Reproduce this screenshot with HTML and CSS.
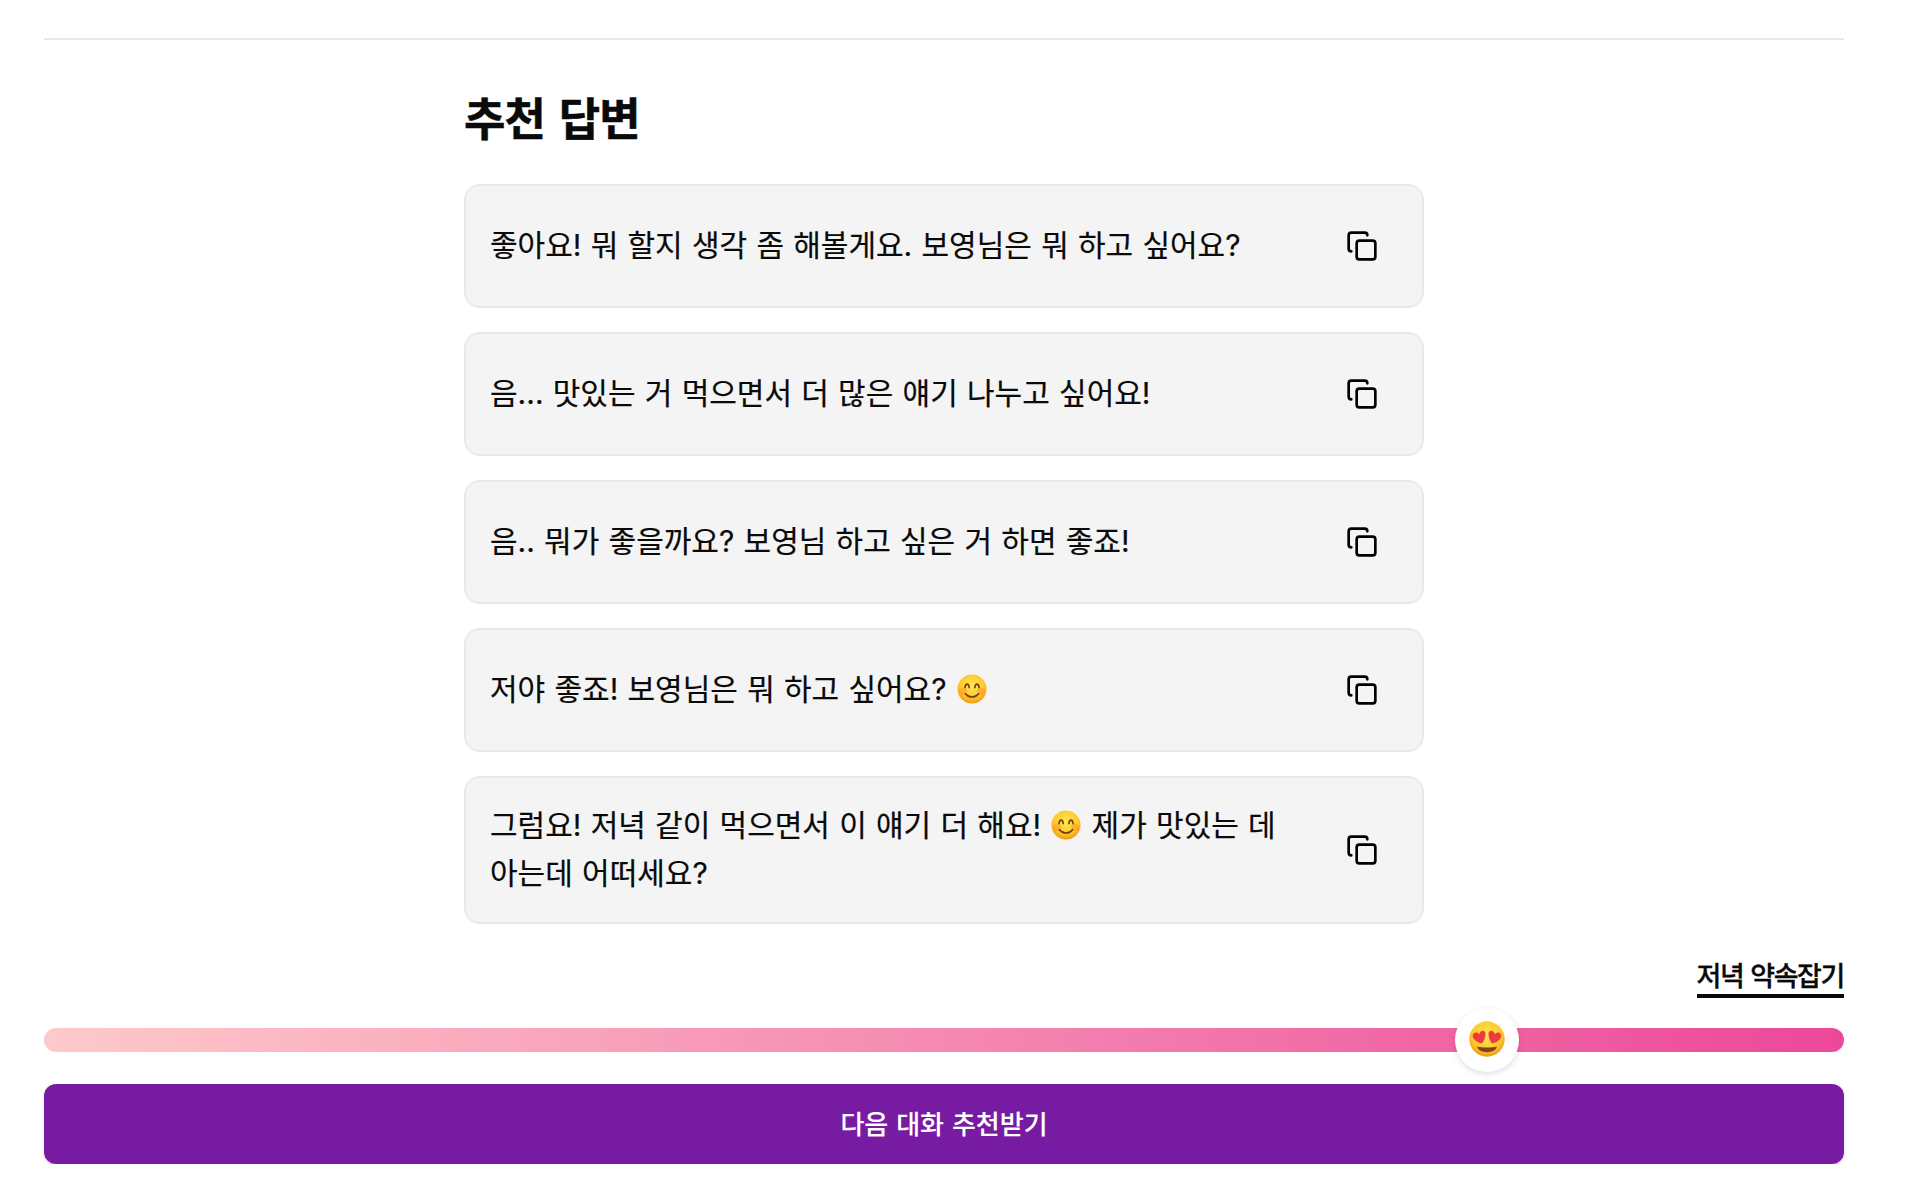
FILE: index.html
```html
<!DOCTYPE html>
<html lang="ko">
<head>
    <meta charset="UTF-8">
    <meta name="viewport" content="width=device-width, initial-scale=1.0">
    <link rel="stylesheet" href="styles.css">
    <title>추천 답변</title>
</head>
<body>
    <svg class="defs" width="0" height="0">
        <defs>
            <radialGradient id="face" cx="50%" cy="38%" r="64%">
                <stop offset="0" stop-color="#ffe750"/>
                <stop offset="0.65" stop-color="#fec92e"/>
                <stop offset="1" stop-color="#ee930f"/>
            </radialGradient>
            <symbol id="copy" viewBox="0 0 24 24">
                <rect width="14" height="14" x="8" y="8" rx="2" ry="2"/>
                <path d="M4 16c-1.1 0-2-.9-2-2V4c0-1.1.9-2 2-2h10c1.1 0 2 .9 2 2"/>
            </symbol>
            <symbol id="smile" viewBox="0 0 32 32">
                <circle cx="16" cy="16" r="15.5" fill="url(#face)"/>
                <circle cx="6.5" cy="18.5" r="4" fill="#ff7a1f" opacity="0.35"/>
                <circle cx="25.5" cy="18.5" r="4" fill="#ff7a1f" opacity="0.35"/>
                <path d="M8.5 14.5c.6-5 4-5 4.6 0M19 14.5c.6-5 4-5 4.6 0M9 21c3.5 4.7 10.5 4.7 14 0" fill="none" stroke="#704015" stroke-width="1.7" stroke-linecap="round"/>
            </symbol>
            <symbol id="heart-eyes" viewBox="0 0 36 36">
                <circle cx="18" cy="18" r="17.7" fill="url(#face)"/>
                <path d="M8 25.5c6 1.4 14 1.4 20 0-1 3.7-5 5.7-10 5.7s-9-2-10-5.7z" fill="#7a451b"/>
                <path d="M13 22.5C8.5 21.5 4 18.8 3.7 15c-.2-3.7 4.5-4.8 6.500-1.500.5-4.500 6-5 6.300-.8.2 3.500-1.500 7-3.500 9.800z" fill="#ee3a3f"/>
                <path d="M23 22.5c4.5-1 9-3.700 9.300-7.500.2-3.700-4.500-4.800-6.500-1.500-.5-4.500-6-5-6.300-.8-.2 3.500 1.500 7 3.500 9.800z" fill="#ee3a3f"/>
            </symbol>
        </defs>
    </svg>

    <main>
        <section class="answers">
            <h1>추천 답변</h1>

            <div class="card">
                <p>좋아요! 뭐 할지 생각 좀 해볼게요. 보영님은 뭐 하고 싶어요?</p>
                <button class="copy-button" aria-label="복사"><svg><use href="#copy"/></svg></button>
            </div>
            <div class="card">
                <p>음... 맛있는 거 먹으면서 더 많은 얘기 나누고 싶어요!</p>
                <button class="copy-button" aria-label="복사"><svg><use href="#copy"/></svg></button>
            </div>
            <div class="card">
                <p>음.. 뭐가 좋을까요? 보영님 하고 싶은 거 하면 좋죠!</p>
                <button class="copy-button" aria-label="복사"><svg><use href="#copy"/></svg></button>
            </div>
            <div class="card">
                <p>저야 좋죠! 보영님은 뭐 하고 싶어요? <svg class="emoji"><use href="#smile"/></svg></p>
                <button class="copy-button" aria-label="복사"><svg><use href="#copy"/></svg></button>
            </div>
            <div class="card">
                <p>그럼요! 저녁 같이 먹으면서 이 얘기 더 해요! <svg class="emoji"><use href="#smile"/></svg> 제가 맛있는 데 아는데 어떠세요?</p>
                <button class="copy-button" aria-label="복사"><svg><use href="#copy"/></svg></button>
            </div>
        </section>

        <div class="goal"><span>저녁 약속잡기</span></div>

        <div class="slider">
            <div class="thumb" style="left: 80.17%"><svg><use href="#heart-eyes"/></svg></div>
        </div>

        <button class="next-button">다음 대화 추천받기</button>
    </main>
</body>
</html>
```
FILE: styles.css
```css
* {
    box-sizing: border-box;
}

body {
    font-family: Inter, 'Noto Sans CJK KR', sans-serif;
    margin: 0;
    background-color: #fff;
    color: #0a0a0a;
}

.defs {
    position: absolute;
}

main {
    width: 1800px;
    margin: 38px 0 0 44px;
    border-top: 2px solid #e8e8e8;
    display: flex;
    flex-direction: column;
}

.answers {
    width: 960px;
    margin: 0 auto;
    padding-top: 48px;
    display: flex;
    flex-direction: column;
    gap: 24px;
}

h1 {
    margin: 0 0 8px;
    font-size: 45px;
    line-height: 64px;
    font-weight: 700;
    letter-spacing: -0.9px;
    word-spacing: 4px;
    -webkit-text-stroke: 0.5px #0a0a0a;
}

.card {
    display: flex;
    align-items: center;
    justify-content: space-between;
    padding: 24px 20px 24px 24px;
    border: 2px solid #e9e9e9;
    border-radius: 16px;
    background-color: #f4f4f4;
}

.card p {
    margin: -1px 0 0;
    padding-bottom: 1px;
    max-width: 816px;
    font-size: 30px;
    line-height: 48px;
    word-spacing: 0.8px;
    word-break: keep-all;
    -webkit-text-stroke: 0.2px #0a0a0a;
}

.emoji {
    width: 30px;
    height: 30px;
    margin: 0 1px;
    vertical-align: -4px;
}

.copy-button {
    display: flex;
    align-items: center;
    justify-content: center;
    width: 80px;
    height: 72px;
    padding: 0;
    border: 0;
    background: none;
    cursor: pointer;
}

.copy-button svg {
    width: 32px;
    height: 32px;
    fill: none;
    stroke: #000;
    stroke-width: 2;
    stroke-linecap: round;
    stroke-linejoin: round;
}

.goal {
    display: flex;
    justify-content: flex-end;
    margin-top: 32px;
}

.goal span {
    height: 42px;
    border-bottom: 4px solid #0a0a0a;
    font-size: 27px;
    line-height: 42px;
    font-weight: 500;
    letter-spacing: -1.4px;
    word-spacing: 1px;
    -webkit-text-stroke: 0.3px #0a0a0a;
}

.slider {
    position: relative;
    height: 24px;
    margin-top: 30px;
    border-radius: 12px;
    background: linear-gradient(to right, #fecaca, #ec4899);
}

.thumb {
    position: absolute;
    top: -20px;
    display: flex;
    align-items: center;
    justify-content: center;
    width: 64px;
    height: 64px;
    margin-left: -32px;
    border-radius: 50%;
    background-color: #fff;
    box-shadow: 0 2px 6px rgba(0, 0, 0, 0.13);
}

.thumb svg {
    width: 36px;
    height: 36px;
    margin-top: -2px;
}

.next-button {
    height: 80px;
    margin-top: 32px;
    padding: 0 0 3px;
    border: 0;
    border-radius: 12px;
    background-color: #771ba2;
    box-shadow: 0 2px 4px rgba(0, 0, 0, 0.12);
    color: #fff;
    font-family: inherit;
    font-size: 26px;
    font-weight: 500;
    word-spacing: 1px;
    -webkit-text-stroke: 0.1px #fff;
    cursor: pointer;
}
```
